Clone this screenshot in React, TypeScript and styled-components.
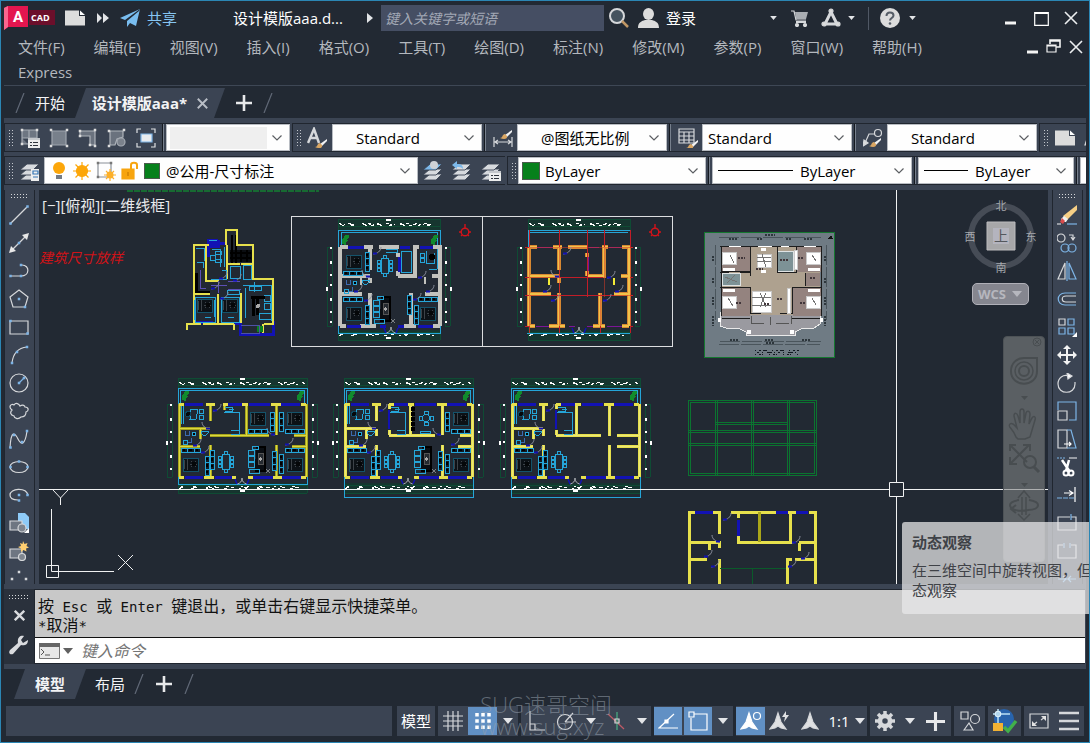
import React from "react";
import styled, { createGlobalStyle, css } from "styled-components";

const c = {
  dark: "#222933",
  panel: "#3b4453",
  line: "#20262f",
  icon: "#d6d8db",
  blue: "#7db4e6",
  active: "#6190c4",
  cyan: "#25a5d8",
  yellow: "#e6e04c",
  navy: "#1212b4",
  green: "#0b7430",
  dim: "#0f4b34",
};

const Global = createGlobalStyle`
  * { box-sizing: border-box; }
  body { margin: 0; background: ${c.dark}; }
  body, button, input, select {
    font-family: "Open Sans", "Noto Sans CJK SC", sans-serif;
    font-size: 15px;
    line-height: 20px;
  }
  button { border: 0; padding: 0; background: none; color: inherit; white-space: nowrap; }
  svg { display: block; flex: none; }
`;

/* ---------- window frame ---------- */

const Window = styled.div`
  display: flex;
  flex-direction: column;
  min-height: 100vh;
  border: 1px solid #2b86b4;
  padding: 0 3px 6px;
  background: ${c.dark};
  color: #fff;
  overflow: hidden;
`;

const TitleBar = styled.header`
  display: flex;
  align-items: center;
  height: 34px;
`;

const Logo = styled.div`
  display: flex;
  width: 51px;
  margin-right: 10px;
`;

const TitleButton = styled.button<{ $w: number; $color?: string }>`
  display: flex;
  align-items: center;
  justify-content: center;
  width: ${(p) => p.$w}px;
  gap: 7px;
  height: 26px;
  color: ${(p) => p.$color ?? "#fff"};
`;

const DocTitle = styled.div`
  width: 134px;
  margin-left: 56px;
  white-space: nowrap;
`;

const SearchBox = styled.input`
  flex: 0 1 223px;
  min-width: 0;
  height: 26px;
  margin-left: 8px;
  padding: 0 4px;
  border: 0;
  background: #454e63;
  font-style: italic;
  font-size: 14px;
  color: #fff;
  &::placeholder { color: #a2a8b5; opacity: 1; }
`;

const Rule = styled.span`
  width: 1px;
  height: 23px;
  margin: 0 9px 0 13px;
  background: #505865;
`;

const Spacer = styled.span<{ $w?: number }>`
  flex: ${(p) => (p.$w ? `0 0 ${p.$w}px` : "1")};
`;

const MenuBar = styled.nav`
  display: flex;
  align-items: flex-start;
  height: 51px;
  border-bottom: 1px solid #3e4755;
`;

const MenuList = styled.div`
  display: flex;
  flex: 1;
  flex-wrap: wrap;
  column-gap: 29px;
  padding: 0 60px 0 14px;
`;

const MenuItem = styled.button`
  height: 25px;
  padding-bottom: 1px;
  color: #b4b8be;
`;

const DocControls = styled.div`
  display: flex;
  gap: 8px;
  padding: 4px 3px 0 0;
`;

/* ---------- tab strips ---------- */

const TabStrip = styled.div<{ $top: number; $left: number }>`
  display: flex;
  align-items: center;
  height: ${(p) => 30 + p.$top}px;
  padding: ${(p) => p.$top}px 0 0 ${(p) => p.$left}px;
  background: ${c.dark};
`;

const Tab = styled.button<{ $w: number; $active?: boolean }>`
  display: flex;
  align-items: center;
  justify-content: center;
  gap: 10px;
  width: ${(p) => p.$w}px;
  height: 30px;
  color: #f2f3f5;
  ${(p) =>
    p.$active &&
    css`
      font-weight: 700;
      background: ${c.panel};
      clip-path: polygon(11px 0, 100% 0, calc(100% - 11px) 100%, 0 100%);
    `}
`;

/* ---------- toolbars ---------- */

const ToolbarArea = styled.div`
  display: flex;
  flex-direction: column;
  gap: 4px;
  padding: 5px 0;
  background: ${c.panel};
  overflow: hidden;
`;

const ToolbarRow = styled.div`
  display: flex;
  height: 29px;
  gap: 2px;
  overflow: hidden;
`;

const Toolbar = styled.div`
  display: flex;
  flex: none;
  align-items: center;
  border: 1px solid ${c.line};
  border-right-width: 0;
  padding-left: 3px;
`;

const Grip = styled.span`
  width: 5px;
  height: 17px;
  margin-right: 2px;
  background: radial-gradient(circle, #c3c7cd 0 0.6px, transparent 1px) 0 0 / 3px 3px;
`;

const TopGrip = styled.span<{ $w: number }>`
  width: ${(p) => p.$w}px;
  height: 6px;
  background: radial-gradient(circle, #d6d8db 0 0.6px, transparent 1px) 0 0 / 3px 3px;
`;

const ToolButton = styled.button`
  display: flex;
  flex: none;
  align-items: center;
  justify-content: center;
  width: 29px;
  height: 27px;
`;

const Divider = styled.span`
  width: 2px;
  height: 27px;
  margin: 0 2px;
  border-left: 1px solid #161b22;
  border-right: 1px solid #77808d;
`;

const ComboBox = styled.label<{ $w: number }>`
  display: flex;
  flex: none;
  align-items: center;
  width: ${(p) => p.$w}px;
  height: 27px;
  padding: 0 7px 0 3px;
  gap: 5px;
  border: 1px solid #b8bcc2;
  background: #fefefe;
`;

const Select = styled.select<{ $indent?: number }>`
  flex: 1;
  min-width: 0;
  height: 22px;
  padding: 0 0 0 ${(p) => p.$indent ?? 0}px;
  border: 0;
  appearance: none;
  background: transparent;
  color: #000;
  opacity: 1;
  &:disabled { background: #efefef; }
`;

const Swatch = styled.span<{ $size: number }>`
  width: ${(p) => p.$size}px;
  height: ${(p) => p.$size}px;
  border: 1px solid #4a5a4c;
  background: #06801b;
`;

const LineSample = styled.span<{ $w: number }>`
  width: ${(p) => p.$w}px;
  height: 1px;
  margin: 0 2px;
  background: #000;
`;

/* ---------- workspace ---------- */

const Workspace = styled.main`
  position: relative;
  display: flex;
  flex: 1;
  min-height: 394px;
  gap: 4px;
  padding-right: 3px;
  background: ${c.panel};
`;

const SideBar = styled.div`
  display: flex;
  flex: none;
  flex-direction: column;
  align-items: center;
  width: 31px;
  padding: 3px 1px 0 0;
  border: 1px solid ${c.line};
  border-top: 0;
  border-bottom: 0;
  height: 394px;
  overflow: hidden;
`;

const SideButton = styled.button`
  display: flex;
  flex: none;
  align-items: center;
  justify-content: center;
  width: 28px;
  height: 28px;
`;

const SideTools = styled.div`
  display: flex;
  flex-direction: column;
  width: 28px;
  padding-top: 2px;
  margin-top: 6px;
  margin-top: 0;
`;

const Canvas = styled.section`
  position: relative;
  flex: 1;
  min-width: 0;
  overflow: hidden;
  background: ${c.dark};
`;

const Drawing = styled.svg`
  position: absolute;
  width: 100%;
  height: 100%;
`;

const ViewLabels = styled.div`
  position: absolute;
  left: 3px;
  top: 5px;
  display: flex;
  color: #e9eaec;
`;

const ViewCube = styled.div`
  position: absolute;
  right: 8px;
  top: 4px;
`;

const Wcs = styled.button`
  position: absolute;
  right: 19px;
  top: 93px;
  display: flex;
  align-items: center;
  gap: 6px;
  width: 57px;
  height: 22px;
  padding-left: 5px;
  border: 1px solid #b0b0b8;
  border-radius: 5px;
  background: #85868f;
  color: #b6b7be;
  font-size: 13px;
`;

const NavBar = styled.div`
  position: absolute;
  right: 3px;
  top: 146px;
  width: 42px;
  height: 226px;
  border-radius: 4px;
  border: 1px solid #4d5256;
  background: rgba(128, 132, 131, 0.6);
`;

const Tooltip = styled.aside`
  position: absolute;
  right: -3px;
  top: 332px;
  z-index: 2;
  width: 187px;
  height: 92px;
  padding: 10px 0 0 10px;
  border-radius: 3px 0 0 3px;
  background: rgba(233, 233, 235, 0.73);
  color: #3f4247;
  overflow: hidden;
  white-space: nowrap;
`;

const TipTitle = styled.strong`
  display: block;
  margin-bottom: 8px;
`;

/* ---------- command line ---------- */

const CommandPanel = styled.section`
  display: flex;
  height: 85px;
  padding: 5px 0;
  background: ${c.panel};
`;

const CommandSide = styled.div`
  display: flex;
  flex-direction: column;
  align-items: center;
  width: 30px;
  padding-top: 5px;
  background: #2a313c;
`;

const SideAction = styled.button`
  display: flex;
  align-items: center;
  height: 30px;
`;

const CommandBody = styled.div`
  display: flex;
  flex: 1;
  flex-direction: column;
  margin-right: 1px;
  border: 1px solid ${c.line};
  border-right: 0;
`;

const History = styled.div`
  height: 48px;
  padding: 7px 3px 0;
  border-bottom: 1px solid #111;
  background: #c8c8c8;
  color: #111;
  font-size: 16px;
  line-height: 19px;
`;

const HistoryLine = styled.div`
  height: 19px;
  white-space: pre;
`;

const Mono = styled.span`
  font-family: "DejaVu Sans Mono", monospace;
  font-size: 14px;
`;

const Prompt = styled.label`
  display: flex;
  flex: 1;
  align-items: center;
  padding-left: 4px;
  gap: 3px;
  background: #fff;
`;

const CommandInput = styled.input`
  flex: 1;
  height: 22px;
  padding: 0 5px;
  border: 0;
  font-style: italic;
  font-size: 16px;
  &::placeholder { color: #757575; opacity: 1; }
`;

/* ---------- status bar ---------- */

const StatusBar = styled.footer`
  position: relative;
  display: flex;
  height: 30px;
  margin-top: 7px;
  padding: 0 2px;
  gap: 3px;
`;

const StatusInfo = styled.div`
  flex: 1;
  margin-right: 2px;
  background: ${c.panel};
`;

const StatusGroup = styled.div`
  display: flex;
  flex: none;
  align-items: center;
  background: ${c.panel};
`;

const StatusButton = styled.button<{ $w: number; $on?: boolean }>`
  display: flex;
  align-items: center;
  justify-content: center;
  width: ${(p) => p.$w}px;
  height: 28px;
  background: ${(p) => (p.$on ? c.active : "transparent")};
`;

const Watermark = styled.div`
  position: absolute;
  right: 474px;
  bottom: -1px;
  font-size: 22px;
  line-height: 22px;
  font-weight: 300;
  color: rgba(150, 160, 172, 0.55);
  pointer-events: none;
  white-space: nowrap;
`;

/* ---------- glyphs ---------- */

type GlyphProps = { w?: number; h?: number; children: React.ReactNode; stroke?: string };

const Glyph = ({ w = 20, h = 20, stroke = c.icon, children }: GlyphProps) => (
  <svg width={w} height={h} viewBox={`0 0 ${w} ${h}`} fill="none" stroke={stroke} strokeWidth="1.2">
    {children}
  </svg>
);

const Chevron = () => (
  <Glyph w={10} h={6} stroke="#5c5f63">
    <path d="M.5.5 5 5 9.500.5" />
  </Glyph>
);
const Caret = ({ small, fill = "#e3e5e8" }: { small?: boolean; fill?: string }) => (
  <svg width={small ? 7 : 10} height={small ? 4 : 6} viewBox="0 0 10 6">
    <path d="M0 0h10L5 6z" fill={fill} />
  </svg>
);
const Slash = () => (
  <Glyph w={10} h={20} stroke="#616977">
    <path d="M1 20 9 0" />
  </Glyph>
);
const Plus = ({ size = 16 }: { size?: number }) => (
  <svg width={size} height={size} viewBox="0 0 16 16">
    <path d="M8 0v16M0 8h16" stroke="#e8e9eb" strokeWidth="2.6" />
  </svg>
);
const Cross = ({ s = 14, w = 1.6, color = "#eceef0" }) => (
  <svg width={s} height={s} viewBox="0 0 14 14">
    <path d="M1 1 13 13M13 1 1 13" stroke={color} strokeWidth={w} />
  </svg>
);
const Minimize = () => (
  <Glyph w={11} h={14}>
    <path d="M0 12h11" stroke="#f4f4f4" strokeWidth="3" />
  </Glyph>
);
const Sheet = () => (
  <Glyph>
    <path d="M0 2.500h14V8h6v9.500H0z" fill="#dcdcdc" stroke="none" />
    <path d="M15 2.500 20 7h-5z" fill="#fff" stroke="none" />
  </Glyph>
);
const Sq = ({ p, f = c.blue }: { p: [number, number][]; f?: string }) => (
  <g stroke="none" fill={f}>
    {p.map(([x, y]) => (
      <rect key={`${x}-${y}`} x={x - 1.25} y={y - 1.25} width="2.500" height="2.500" />
    ))}
  </g>
);
const Brush = ({ x = 0, y = 0 }) => (
  <g transform={`translate(${x} ${y})`} stroke="none">
    <path d="M11 0 4 5l2 2 5-5z" fill="#f1f2f3" />
    <path d="M4 4c-3 0-2 4-5 4 4 2 8 1 7-2z" fill="#d9a663" />
  </g>
);
const PropertyCard = () => (
  <g stroke="none">
    <path d="M8 10h12v10H8z" fill="#eceded" />
    <path d="M8 10h12v2H8z" fill="#c5c8cc" />
    <path d="M10 14h2v1h-2zm3 0h5v1h-5zm-3 3h2v1h-2zm3 0h5v1h-5z" fill="#30353d" />
  </g>
);
const Corners = () => <path d="M1 5V1h4M15 1h4v4M19 15v4h-4M5 19H1v-4" stroke="#dfe1e4" />;
const Sheets = ({ top = "#d7dade" }) => (
  <g stroke={c.panel} strokeWidth=".9" fill="#d7dade">
    <path d="m0 19 7-6h12l-6 6z" />
    <path d="m0 14 7-6h12l-6 6z" />
    <path d="m0 9 7-6h12l-6 6z" fill={top} />
  </g>
);

const viewportIcons = [
  <><path d="M2 2h15v8H2zM9 2v8M2 10v6h6" fill="#6e7682" stroke="#a5abb3" /><Sq f="#ddd" p={[[2, 2], [17, 2], [2, 16]]} /><PropertyCard /></>,
  <><path d="M3 3h14v14H3z" fill="#78808b" stroke="#9ea4ad" /><Sq f="#ddd" p={[[2, 2], [18, 2], [2, 18], [18, 18]]} /></>,
  <><path d="M2 3h15v14h-5V8H2z" fill="#6a727e" stroke="#aeb3ba" /><Sq f="#ddd" p={[[2, 3], [17, 2], [17, 18], [12, 17], [2, 8]]} /></>,
  <><path d="M3 3h13v6l-6 2-2 6H3z" fill="#6a727e" stroke="#aeb3ba" /><circle cx="14" cy="14" r="4" fill="#7b828c" stroke="#a5abb3" /><Sq f="#ddd" p={[[2, 3], [17, 2], [2, 18]]} /></>,
  <><Corners /><path d="M5 6h11v8H5z" fill="#e8ebee" stroke={c.blue} /></>,
];

const drawIcons: [string, React.ReactNode][] = [
  ["直线", <><path d="M1 19 18 2" /><Sq p={[[1.5, 18.5], [18.5, 1.5]]} /></>],
  ["构造线", <><path d="M3 17 17 3" /><path d="M0 20 2 13l5 5zM20 0l-7 2 5 5z" fill="#e8e8e8" stroke="none" /><Sq p={[[10, 10]]} /></>],
  ["多段线", <><path d="M1 15h11c9 0 9-11 1-11" /><Sq p={[[1.5, 15], [12, 15], [12, 4]]} /></>],
  ["多边形", <><path d="m10 1 9 7-3 10H4L1 8z" /><Sq p={[[10, 10], [16, 18]]} /></>],
  ["矩形", <><path d="M1 4h18v13H1z" /><Sq p={[[1.5, 4], [18.5, 16.500]]} /></>],
  ["圆弧", <><path d="M3 18C4 9 9 3 18 2" /><Sq p={[[3, 18], [8, 7], [18, 2]]} /></>],
  ["圆", <><circle cx="10" cy="10" r="9" /><path d="m10 10 5-5" stroke={c.blue} /><Sq p={[[10, 10], [15, 5]]} /></>],
  ["修订云线", <path d="M3 9C-1 6 2 2 5 4c2-3 5-1 6 1 3-2 5 0 5 1 4 0 4 4 1 5 0 4-2 5-5 5-3 3-7 1-7-1-4-1-4-4-2-6z" />],
  ["样条曲线", <><path d="M1 19C2 0 6 4 9 10s7 7 9-8" /><Sq p={[[1.5, 18.5], [5, 6], [13, 13], [18, 2]]} /></>],
  ["椭圆", <><ellipse cx="10" cy="10" rx="9" ry="5.500" /><Sq p={[[1.500, 10], [18.500, 10], [10, 4.500]]} /></>],
  ["椭圆弧", <><path d="M19 10C17 2 1 3 1 10c0 4 4 5 8 5" /><Sq p={[[10, 10], [18.5, 10], [10, 15.500]]} /></>],
  ["插入块", <><path d="M9 0h7l4 4v12H9z" fill="#8ecbf8" stroke="none" /><path d="M1 8h12v9H1z" fill="#6e7682" /><circle cx="13" cy="15" r="4" fill="#7e858f" /><path d="M20 15v5h-5z" fill="#fff" stroke="none" /></>],
  ["创建块", <><path d="M1 8h12v9H1z" fill="#6e7682" /><circle cx="13" cy="16" r="3.500" fill="#7e858f" /><path d="m14 0 1.500 3 3-1-1 3 2.500 1.500-3 1 .5 3-3-1.500-2.500 2v-3.500L9 6l3-1-1-3 2.500 1z" fill="#ffcf70" stroke="none" /></>],
  ["点", <Sq f="#d6d8db" p={[[10, 3], [3, 10], [17, 10]]} />],
];

const modifyIcons: [string, React.ReactNode][] = [
  ["删除", <><path d="M20 0v5L10 15l-4-4z" fill="#f6cf85" stroke="none" /><path d="m7 11 4 3-2 3H4v-3z" fill="#f0f0f0" stroke="none" /><path d="m5 13 3 3-2 3-3-2z" fill="#d94b4b" stroke="none" /><path d="M0 19h4" /><path d="M10 19h10" stroke={c.blue} /></>],
  ["复制", <><circle cx="4" cy="5" r="4" /><path d="M12 2h4v4m-2-2 2 3 2-3" /><circle cx="8" cy="15" r="4" stroke={c.blue} /><circle cx="15" cy="15" r="4" stroke={c.blue} /></>],
  ["镜像", <><path d="M8 2v16H1z" /><path d="M12 2v16h7zM10 0v20" stroke={c.blue} /></>],
  ["偏移", <><path d="M19 4H8C-1 4-1 16 8 16h11" stroke={c.blue} /><path d="M19 7H9c-5 0-5 6 0 6h10" /></>],
  ["阵列", <><path d="M2 2h6v6H2z" /><path d="M11 2h6v6h-6zM2 11h6v6H2zM11 11h6v6h-6z" stroke={c.blue} /><path d="M20 15v5h-5z" fill="#fff" stroke="none" /></>],
  ["移动", <path d="M10 0 14 4h-3v5h5V6l4 4-4 4v-3h-5v5h3l-4 4-4-4h3v-5H4v3l-4-4 4-4v3h5V4H6z" fill="#f2f2f2" stroke="none" />],
  ["旋转", <><path d="M12 3C6 1 1 5 1 11c0 11 17 11 17 0V9" /><path d="m10 0 5 3-4 3z" fill="#fff" /></>],
  ["缩放", <><path d="M1 9V1h18v18h-7" stroke={c.blue} /><path d="M1 10h9v9H1z" /></>],
  ["拉伸", <><path d="M1 1h9v18H1z" /><path d="M10 1h4l5 18h-9" stroke={c.blue} /><path d="M7 15h7m-2-2 2 2-2 2" stroke="#fff" /></>],
  ["修剪", <><path d="M0 1h9" stroke={c.blue} strokeDasharray="2 1" /><path d="M12 1h8" /><path d="m5 3 8 12M12 3 9 14" stroke="#fff" strokeWidth="2.500" /><circle cx="9" cy="16" r="2.500" stroke="#fff" strokeWidth="2" /><circle cx="14" cy="16" r="2.500" stroke="#fff" strokeWidth="2" /></>],
  ["延伸", <><path d="M18 2v15M7 8h8m-3-2.500 4 2.500-4 2.500" stroke="#fff" /><path d="M0 13h17" stroke={c.blue} strokeDasharray="5 1" /></>],
  ["打断于点", <><path d="M14 4h5v13H1V4h12" /><path d="M14 1v6" stroke={c.blue} /></>],
  ["打断", <><path d="M6 4H1v13h18V4h-5" /><path d="M7 2v5M13 2v5" stroke={c.blue} /></>],
  ["合并", <path d="M1 10h18M6 7l3 3-3 3M14 7l-3 3 3 3" stroke={c.blue} />],
];

/* ---------- drawing content ---------- */

const Bed = ({ x, y }: { x: number; y: number }) => (
  <g transform={`translate(${x} ${y})`}>
    <path d="M0 0h15v13H0z" fill="#0c1116" stroke="#14536b" />
    <path d="M1 2v9M4 1v11M8 3l5 6M13 3 8 9M7 6h7" stroke="#3c4248" />
    <path d="M9 4h4v4H9z" fill="#050709" />
  </g>
);
const Cabinet = ({ x, y, v }: { x: number; y: number; v?: boolean }) => (
  <g transform={`translate(${x} ${y})${v ? " rotate(90)" : ""}`}>
    <path d="M0 0h19v4H0zM6 0v4M13 0v4" stroke={c.cyan} fill="#111b24" />
    <path d="M2 2h2M8 2h3M15 2h2" stroke="#000" strokeWidth="2" />
  </g>
);
const Dining = ({ x, y }: { x: number; y: number }) => (
  <g transform={`translate(${x} ${y})`} stroke={c.cyan} fill="none">
    <path d="M5 4h7v15H5zM7 1h3v3H7zM7 19h3v3H7z" />
    <path d="M1 6h3v3H1zM1 10h3v3H1zM1 14h3v3H1zM13 6h3v3h-3zM13 10h3v3h-3zM13 14h3v3h-3z" />
  </g>
);
const Sofa = ({ x, y }: { x: number; y: number }) => (
  <g transform={`translate(${x} ${y})`} fill="none">
    <path d="M8 1h9v24H7" fill="#0a0e13" stroke="#000" strokeWidth="2" />
    <path d="M10 7h5v11h-5z" fill="#252a30" stroke="#555" />
    <circle cx="12.500" cy="13" r="1.800" fill="#aaa" />
    <path d="M0 4h6v5H0zM0 10h6v5H0zM0 16h6v5H0zM1 23h10v4H1zM4 0h6v3H4z" stroke={c.cyan} />
    <path d="m18 23 4 4m0-4-4 4" stroke="#7d8286" />
  </g>
);
const Desk = ({ x, y }: { x: number; y: number }) => (
  <g transform={`translate(${x} ${y})`} fill="none" stroke={c.cyan}>
    <path d="M0 0v18M2 0v18" />
    <path d="M10 3h7l-2 10h-6zM18 3h4v4h-4zM18 9h4v4h-4z" />
    <circle cx="7" cy="8" r="2.500" fill="#05080b" stroke="#0d4a63" />
  </g>
);
const Bath = ({ x, y }: { x: number; y: number }) => (
  <g transform={`translate(${x} ${y})`} fill="none" stroke={c.cyan}>
    <path d="M20 1h7v2l-2 2h-3l-2-2zM2 10h4v4H2z" />
    <path d="M4 1v4h4V1M10 8v4H7" stroke="#3c6bb0" />
    <circle cx="13" cy="4" r="2" fill="#000" />
  </g>
);
const Plant = ({ x, y }: { x: number; y: number }) => (
  <path transform={`translate(${x} ${y})`} d="m0 9 0-5 2-1 1-3 4 0 0 3-2 1 1 2-2 1 0 3z" fill="#118a2d" />
);
const Door = ({ x, y, flip }: { x: number; y: number; flip?: boolean }) => (
  <g transform={`translate(${x} ${y}) scale(${flip ? -1 : 1} 1)`} fill="none" shapeRendering="auto">
    <path d="M0 7C4 7 8 4 8 0" stroke="#8a8e9c" />
    <path d="M0 6.500h4" stroke={c.navy} strokeWidth="2" />
  </g>
);
const Entry = ({ x, y }: { x: number; y: number }) => (
  <g transform={`translate(${x} ${y})`} fill="none" shapeRendering="auto">
    <path d="M-5 6Q0 5 0 0 0 5 5 6" stroke="#a9adb2" />
    <path d="M-7 1-5 6M7 1 5 6" stroke={c.navy} strokeWidth="1.500" />
  </g>
);

/* Dimension chains round a plan: green runs with tiny figures. */
const Dimensions = ({ x, y, w, h, top, bottom }: { x: number; y: number; w: number; h: number; top: number; bottom: number }) => (
  <g fill="none">
    <path d={`M${x} ${y - top - 3}h${w}M${x} ${y + bottom + 3}h${w}`} stroke="#16352f" strokeWidth="11" />
    <path d={`M${x} ${y - top - 8}h${w}M${x} ${y - top - 1}h${w}M${x} ${y + bottom}h${w}M${x} ${y + bottom + 8}h${w}`} stroke={c.dim} />
    <path d={`M${x - 11} ${y}v${h}M${x - 6} ${y}v${h}M${x + w + 5} ${y}v${h}M${x + w + 10} ${y}v${h}M${x - 11} ${y}h5M${x - 11} ${y + h}h5M${x + w + 5} ${y}h5M${x + w + 5} ${y + h}h5`} stroke={c.dim} />
    <path d={`M${x} ${y - top - 8}v14M${x + w} ${y - top - 8}v14M${x} ${y + bottom - 6}v14M${x + w} ${y + bottom - 6}v14`} stroke={c.dim} />
    <path d={`M${x + 2} ${y - top - 3}h${w - 4}`} stroke="#fff" strokeWidth="1" strokeDasharray="2 2 1 5 4 9 3 3 2 2 1 3 4 9" />
    <path d={`M${x + 1} ${y - top - 4}h${w - 4}M${x + 4} ${y - top - 2}h${w - 6}`} stroke="#fff" strokeWidth="1" strokeDasharray="2 7 3 11 2 4 3 6" />
    <path d={`M${x + 2} ${y + bottom + 2}h${w - 4}`} stroke="#fff" strokeWidth="1" strokeDasharray="3 10 4 9 2 1 3 3 4 12" />
    <path d={`M${x + 3} ${y + bottom + 1}h${w - 6}M${x + 1} ${y + bottom + 3}h${w - 4}`} stroke="#fff" strokeWidth="1" strokeDasharray="2 10 3 12 2 4" />
    <path d={`M${x + w / 2 - 3} ${y - top - 7}h5M${x + w / 2 - 3} ${y + bottom + 6}h5`} stroke="#fff" strokeWidth="2" />
    <path d={`M${x - 7} ${y}v${h}M${x + w + 6} ${y}v${h}`} stroke="#fff" strokeWidth="2" strokeDasharray="2 12 3 10 2 8" />
    <path d={`M${x - 11} ${y + h / 2}v4M${x + w + 11} ${y + h / 2}v4`} stroke="#fff" strokeWidth="2" />
  </g>
);

const wallsTownhouse =
  "M0 0h8M24 0h9M39 0h20M73 0h6M93 0h7V79M0 0V79M0 79h6M20 79h16M64 79h12M93 79h7M30 0v23M30 31v5M30 46v33M58 6v4M58 24v5M75 0v29H58M0 29h30M0 47h22M92 29h8M85 47h15M71 46v33";
const innerWallsTownhouse = "M21 30v8M85 30v7";
const windowsTownhouse = "M8 0h16M60 0h10M80 0h13M7 79h14M40 79h6M58 79h6M78 79h15M59 10v15";

const PlanFurnished = () => (
  <g transform="translate(340 247)" fill="none">
    <Dimensions x={-2} y={0} w={102} h={79} top={20} bottom={85} />
    <path d="M-2 86v-103h102V86zM1 0v-15h96V0" stroke={c.cyan} />
    <path d={wallsTownhouse} stroke="#c2c2bd" strokeWidth="4" />
    <path d={innerWallsTownhouse} stroke="#c2c2bd" strokeWidth="2" />
    <path d={windowsTownhouse} stroke={c.navy} strokeWidth="3" />
    <Bed x={6} y={8} /><Bed x={6} y={60} /><Bed x={80} y={60} />
    <Cabinet x={3} y={24} /><Cabinet x={3} y={50} /><Cabinet x={78} y={50} />
    <Cabinet x={29} y={5} v /><Cabinet x={29} y={58} v /><Cabinet x={71} y={48} v /><Cabinet x={78} y={58} v />
    <Dining x={36} y={7} /><Sofa x={33} y={49} /><Bath x={2} y={32} />
    <path d="M46 2h11v3H46M61 4h10v21H61zM80 6h4v4h-4zM80 11h4v4h-4zM86 4v12h8V6M97 2v20M89 22h8" stroke={c.cyan} />
    <circle cx="92" cy="10" r="3" fill="#000" />
    <Door x={33} y={0} /><Door x={30} y={23} flip /><Door x={78} y={24} /><Door x={14} y={38} /><Door x={86} y={38} /><Door x={24} y={47} /><Door x={73} y={46} />
    <Plant x={2} y={-12} /><Plant x={91} y={-12} /><Entry x={51} y={80} />
  </g>
);

const PlanStructure = () => (
  <g transform="translate(529 247)" fill="none">
    <Dimensions x={-1} y={0} w={102} h={79} top={20} bottom={85} />
    <path d="M-2 86h103M-1 0v-17h102V0M1 -15h98" stroke={c.cyan} />
    <path d={windowsTownhouse} stroke="#7d1596" />
    <path d={wallsTownhouse} stroke="#d88832" strokeWidth="4" />
    <path d={wallsTownhouse} stroke="#f0c24a" strokeWidth="2" />
    <path d="M0-17V0M30-17V0M58-17V50M75-17V0M101-17V0M30 79v7M71 79v7M0 79v7M101 79v7M-4 0h4M101 0h3M-4 30h4M30 30h44M101 30h3M-4 48h4M22 48h63M101 48h3M-4 79h4M101 79h3M30 23v8M30 36v10" stroke="#c21d28" />
    <path d="M0 0V86M30 0V79M75 0v50M101 0V79M71 46v33M0 0h104M0 30h30M0 48h22M85 48h19" stroke="#cf3a26" strokeOpacity=".55" />
    <path d="M20 31v7M85 31v7" stroke="#f3ec36" strokeWidth="2" />
    <Door x={34} y={0} /><Door x={30} y={23} flip /><Door x={78} y={24} /><Door x={14} y={38} /><Door x={86} y={38} /><Door x={22} y={47} /><Door x={74} y={47} />
    <Entry x={50} y={80} />
  </g>
);

const Compass = ({ x, y }: { x: number; y: number }) => (
  <g transform={`translate(${x} ${y})`} fill="none" stroke="#d31219" strokeWidth="1.400" shapeRendering="auto">
    <circle r="3.800" /><path d="M0-8v4M-6 0h2M4 0h2M-4 4l1-1M4 4 3 3" />
  </g>
);

const PlanWide = ({ x, balcony, variant }: { x: number; balcony: number; variant: 1 | 2 | 3 }) => {
  const core = {
    1: "M31 0v17M0 24h31M31 31h59M67 0v31M97 0v31M115 31h12M0 42h21M113 42h14M31 41v32M97 41v32M21 24v11M45 0v6",
    2: "M31 0v17M0 24h31M31 25v7M44 31h46M44 0v5M65 0v31M97 0v31M115 31h12M0 42h21M113 42h14M31 41v32M97 41v32M21 24v11M44 26v5",
    3: "M31 0v17M0 24h31M31 25v7M44 31h45M44 0v5M64 0v31M97 0v32M97 41v32M0 42h21M105 31h22M105 42h22M31 41v32M21 24v11M44 26v5",
  }[variant];
  const piers = "M0 0H5M27 0h9M44 0h5M63 0h6M92 0h10M122 0h5M0 73H5M25 73h10M53 73h4M69 73h5M94 73h9M122 73h5";
  return (
    <g transform={`translate(${x} 404)`} fill="none">
      <Dimensions x={-1} y={0} w={129} h={73} top={18} bottom={81} />
      <path d={`M-1 ${balcony}V-16H128V${balcony}zM1 0v-14h124V0`} stroke={c.cyan} />
      <path d={`M0 0V73M127 0V73${core}`} stroke={variant === 1 ? "#a7a51d" : c.yellow} strokeWidth="3" />
      <path d={`M0 0V73M127 0V73${core}`} stroke={variant === 1 ? "#dcd83f" : "#ece778"} />
      <path d="M6 0h18M49 0h14M70 0h21M102 0h19M6 73h18M36 73h17M74 73h20M103 73h19" stroke={c.navy} strokeWidth="3" />
      <path d={piers} stroke={c.yellow} strokeWidth="3" />
      {variant > 1 && <path d="M44 6v19" stroke={c.navy} strokeWidth="2" />}
      <Desk x={2} y={2} /><Bath x={2} y={26} /><Cabinet x={2} y={44} /><Bed x={4} y={54} />
      <Cabinet x={35} y={46} v /><Cabinet x={30} y={52} v /><Dining x={38} y={46} />
      <path d="M46 3h7v4H46M45 8h15v19M52 26h8v4h-8M60 8v22M50 5h5" stroke={c.cyan} />
      {variant !== 3 && (
        <>
          <Bed x={108} y={8} /><Bed x={108} y={54} /><Cabinet x={106} y={25} /><Cabinet x={106} y={44} />
          <Cabinet x={104} y={8} v /><Cabinet x={104} y={50} v /><Cabinet x={97} y={47} v /><Sofa x={69} y={42} />
          <Door x={106} y={34} /><Door x={96} y={24} flip />
        </>
      )}
      {variant === 1 && (<><Bed x={71} y={8} /><Cabinet x={69} y={25} /><Cabinet x={95} y={8} v /></>)}
      {variant === 2 && (
        <>
          <path d="M68 3v24" stroke="#000" strokeWidth="4" strokeDasharray="4 1" />
          <circle cx="81" cy="14" r="3.500" stroke={c.cyan} />
          <path d="M79 7h4v3h-4zM79 18h4v3h-4zM74 12h3v4h-3zM85 12h3v4h-3zM75 27h10v2H75z" stroke={c.cyan} />
        </>
      )}
      <Door x={34} y={0} /><Door x={31} y={18} flip /><Door x={14} y={35} /><Door x={22} y={42} />
      <Plant x={3} y={-13} /><Plant x={118} y={-13} /><Entry x={63} y={74} />
    </g>
  );
};

const PlanApartment = () => (
  <g fill="none">
    <path d="M230 250h22v12h-22z" fill="#0a0d11" />
    <path d="M232 235v28M236 235v28M241 250v12M247 250v12M230 253h21M230 258h21" stroke="#000" strokeWidth="2" />
    <path d="M196 273v20h14" stroke="#000" strokeWidth="4" />
    <path d="M208 257V246h10v-6M226 243h-17M193 322h20M222 323h18v11h33v-13" stroke={c.navy} strokeWidth="3" />
    <path d="M207 239h11v8h-11z" fill={c.navy} />
    <path d="M187 330v-6h14M194 323v-78h15M194 294h16M206 245v36h13M226 245v-15h11v15h16v34h20v45h-9M227 245v34M227 264h13M241 264h12M218 294v29M241 293v30M203 324h31M234 324v6M263 324v9" stroke={c.yellow} strokeWidth="2" />
    <path d="M209 240h8M212 249h8v18M224 247v20M210 255h5v5h-5zM215 251h6v3h-6zM215 259h6v3h-6zM222 270h4v9h-15M230 266h10v12h-10zM243 265h8v14h-8zM227 290h12v4h-12zM243 285h28v36M245 288v30M249 286h12v4h-12zM254 282v10M264 295h6v6h-6zM264 303h6v6h-6zM259 313h12v6h-12zM195 297h20v25h-20zM221 297h18v25h-18zM196 248h8v13M197 262h6v6M205 317h6M228 317h6M214 300v17M194 300v20" stroke={c.cyan} />
    <Bed x={197} y={299} /><Bed x={222} y={299} />
    <path d="M253 297v19M257 297v18M251 297h14" stroke="#000" strokeWidth="3" />
    <circle cx="258" cy="306" r="2" fill="#aaa" />
    <path d="M200 270v18h6M211 285h16M218 281v12M228 281h12M228 289h13" stroke="#5c4fb5" />
    <Door x={211} y={282} /><Door x={220} y={292} /><Door x={233} y={274} /><Door x={219} y={272} />
    <path d="M257 326h6v6h-6z" fill="#0a8021" /><path d="M241 325h18v8h-18" stroke="#4d52a5" />
  </g>
);

const PlanRendered = () => (
  <g fill="none">
    <path d="M704 232h130v125h-130z" fill="#6f7b84" stroke="#14772f" />
    <path d="M720 312v14l6 2h12l8 4v3h49v-3l8-4h11l6-4v-12z" fill="#9a9aa0" stroke="#e9e9e9" />
    <path d="M721 247h99v68H721z" fill="#aea18f" />
    <path d="M721 247h29v24h-29zM797 247h24v25h-24zM721 288h29v28h-29zM793 288h28v28h-28zM805 273h15v13h-15z" fill="#94837f" />
    <path d="M777 251h16v20h-16zM722 273h18v12h-18z" fill="#7d9296" stroke="#dfe3e4" />
    <path d="M721 246v70M821 246v70M720 246h102M750 247v24h-29M777 247v25h19v-25M720 272h9M740 272h10v4M720 287h30v27M792 287h30M792 287v27M805 273v13M750 313h11M780 313h12M722 318h28M792 318h29" stroke="#1d1d1d" />
    <path d="M729 246h12M758 246h14M781 246h8M804 246h12" stroke="#fff" />
    <path d="M722 252h14v12h-14zM806 252h14v12h-14zM722 296h14v12h-14zM806 296h14v12h-14zM752 291h19v21h-19zM757 254h14v13h-14zM794 250h3v19h-3zM787 288h3v25h-3z" fill="#fff" stroke="#c9c9c9" />
    <path d="M761 248h5v3h-5zM761 270h5v3h-5zM723 268h12v3h-12zM808 268h12v3h-12zM723 289h12v3h-12zM808 289h12v3h-12zM747 330h4v4h-4zM790 330h4v4h-4zM718 318h3v4h-3zM820 318h3v4h-3z" fill="#fff" />
    <path d="M757 257h14M757 261h14M762 254l4 13M752 297h19M752 305h19M760 293l6 14M766 293l-6 14M730 255l4 8M812 255l4 6M728 298l5 8M812 298l4 7M725 277l12 5M735 275l-8 8" stroke="#747474" />
    <path d="M770 317v8M752 323h12M776 323h13M751 316v8M791 316v8" stroke="#555" />
    <path d="M719 237h102M715 245v75M826 245v75M720 341h101M719 344h101" stroke="#4a555c" strokeDasharray="20 2" />
    <path d="M729 239h8M757 239h5M786 239h6M804 239h8M765 235h10M713 256v6M713 278v5M713 297v8M713 316v10M825 256v6M825 278v5M825 297v8M825 316v10M730 340h8M765 340h9M802 340h8M766 343h8" stroke="#2d363c" strokeWidth="2" strokeDasharray="2 1" />
    <path d="M738 258h7M780 260h8M764 304h5M777 299h6M736 303h6M800 303h6M798 258h6M756 269h7M810 278h6" stroke="#41363a" strokeWidth="2" strokeDasharray="2 1" />
    <path d="M755 350h44" stroke="#111820" strokeDasharray="1 3 2 2 4 5" />
    <path d="M757 352h42" stroke="#111820" strokeDasharray="2 3 1 4 5 2 1 3" />
    <path d="M755 354h43" stroke="#111820" strokeDasharray="1 3 2 1 1 6" />
    <path d="m831 235-3 4h5z" fill="#111" />
  </g>
);

const PlanYellow = () => (
  <g transform="translate(689 512)" fill="none">
    <path d="M0 74V0H6M24 0h8M42 0h46M98 0h9M120 0h6V74M30 0v22M0 30h30v6M0 47h18M30 47v27M49 0v6M49 24v6h52V0M20 31v7M110 31v8M110 30h16M98 74V47h5M106 47h20" stroke={c.yellow} strokeWidth="3" />
    <path d="M70 0v30" stroke="#aaa619" strokeWidth="3" />
    <path d="M6 0h18M87 0h12M107 0h12M49 8v16" stroke={c.navy} strokeWidth="3" />
    <path d="M31 56h66M63 56v20" stroke="#0a5a2a" />
    <Door x={34} y={1} /><Door x={31} y={23} flip /><Door x={103} y={24} /><Door x={15} y={38} /><Door x={112} y={40} /><Door x={22} y={48} /><Door x={99} y={48} />
  </g>
);

const Model = () => (
  <Drawing aria-label="模型空间">
    <g transform="translate(-39 -190)" shapeRendering="crispEdges">
      <path d="M127 190.500h192" stroke="#176a32" strokeWidth="2" strokeDasharray="6 1" />
      <text x="39" y="263" fill="#d01318" fontSize="14" fontStyle="italic" fontFamily='"Noto Sans CJK SC", sans-serif'>建筑尺寸放样</text>
      <path d="M291.500 216.500h381v130h-381zM482 217v129" stroke="#dcdde0" fill="none" />
      <PlanApartment />
      <PlanFurnished />
      <PlanStructure />
      <Compass x={465} y={232} />
      <Compass x={655} y={232} />
      <PlanRendered />
      <PlanWide x={179} balcony={80} variant={1} />
      <PlanWide x={345} balcony={93} variant={2} />
      <PlanWide x={512} balcony={93} variant={3} />
      <path d="M688 400h128v75H688zM690 402h124v71H690zM715 400v75M717 400v75M751 400v75M753 400v75M787 400v75M789 400v75M716 422h72M716 424h72M688 430h128M688 432h128M688 443h128M688 445h128" fill="none" stroke={c.green} />
      <PlanYellow />
      <g stroke="#f0f1f2" fill="none" shapeRendering="auto">
        <path d="M896.500 190V482M896.500 497V4000M39 489.500H889M904 489.500H4000M889.500 482.500h14v14h-14z" />
        <path d="M46.500 565.500h12v12h-12zM51.500 509v62.500H114M118 555l15 15M133 555l-15 15M53 490l7.500 8 7.500-8M60.500 498v7" />
      </g>
    </g>
  </Drawing>
);

/* ---------- pieces of the window ---------- */

type ComboProps = { w: number; label: string; value?: string; indent?: number; disabled?: boolean; children?: React.ReactNode };
const Combo = ({ w, label, value = "", indent, disabled, children }: ComboProps) => (
  <ComboBox $w={w}>
    {children}
    <Select aria-label={label} $indent={indent} disabled={disabled}>
      <option>{value}</option>
    </Select>
    <Chevron />
  </ComboBox>
);

const PaletteHeader = styled.div`
  display: flex;
  height: 12px;
`;

const ToolPalette = ({ tools }: { tools: [string, React.ReactNode][] }) => (
  <SideBar>
    <PaletteHeader><TopGrip $w={18} /></PaletteHeader>
    <SideTools>
      {tools.map(([name, icon]) => (
        <SideButton key={name} aria-label={name}><Glyph>{icon}</Glyph></SideButton>
      ))}
    </SideTools>
  </SideBar>
);

const arrowShape = "m9 2 3 9 5 7-5-1-3-2-3 2-5 1 5-7z";

const menus = ["文件(F)", "编辑(E)", "视图(V)", "插入(I)", "格式(O)", "工具(T)", "绘图(D)", "标注(N)", "修改(M)", "参数(P)", "窗口(W)", "帮助(H)", "Express"];

export default function App() {
  return (
    <>
      <Global />
      <Window>
        <TitleBar>
          <Logo>
            <svg width="51" height="24" viewBox="0 0 51 24">
              <path d="M25 4h26v15H25z" fill="#6c0f2b" />
              <path d="M0 2 4 0h20v21H4l-4 3z" fill="#e4164f" />
              <path d="M0 2 4 0v21l-4 3z" fill="#f9668e" />
              <text x="9" y="16" fill="#fff" fontSize="15" fontWeight="700" fontFamily="Roboto">A</text>
              <text x="27" y="15" fill="#fff" fontSize="9" fontWeight="700" fontFamily="Open Sans">CAD</text>
            </svg>
          </Logo>
          <TitleButton $w={20} aria-label="新建"><Sheet /></TitleButton>
          <TitleButton $w={35} aria-label="更多">
            <svg width="12" height="10" viewBox="0 0 12 10" fill="#e2e4e7"><path d="m0 0 5 5-5 5zM6 0l6 5-6 5z" /></svg>
          </TitleButton>
          <TitleButton $w={57} $color="#86c5f2">
            <svg width="20" height="18" viewBox="0 0 20 18" fill="#79bdf0"><path d="M20 0 0 9l5 2zM19 2 7 12v6l3-4 6 3L20 0z" /></svg>
            共享
          </TitleButton>
          <DocTitle>设计模版aaa.d...</DocTitle>
          <svg width="6" height="10" viewBox="0 0 6 10" fill="#e2e4e7"><path d="m0 0 6 5-6 5z" /></svg>
          <SearchBox aria-label="搜索" placeholder="键入关键字或短语" />
          <TitleButton $w={30} aria-label="查找">
            <Glyph><circle cx="8" cy="8" r="7" strokeWidth="2" fill="#45535f" /><path d="m13 13 6 6" stroke="#c19765" strokeWidth="2.500" /></Glyph>
          </TitleButton>
          <TitleButton $w={66}>
            <svg width="21" height="20" viewBox="0 0 21 20" fill="#dcdcdc"><ellipse cx="10.500" cy="6" rx="5.500" ry="6" /><path d="M0 20c0-6 4-7 7-8h7c3 1 7 2 7 8z" /></svg>
            登录
          </TitleButton>
          <Spacer />
          <Caret small />
          <TitleButton $w={44} aria-label="购物车">
            <Glyph w={17} h={18}><path d="M0 2h3l2 9h10" /><path d="M4 3h13l-2 7H5z" fill="#a9adb3" stroke="none" /><path d="M5 13h10" strokeWidth="2" /><circle cx="6" cy="16" r="1.500" fill="#ddd" /><circle cx="14" cy="16" r="1.500" fill="#ddd" /></Glyph>
          </TitleButton>
          <TitleButton $w={20} aria-label="应用">
            <Glyph><path d="M10 4 4 16h12z" strokeWidth="3" strokeLinejoin="round" /><circle cx="10" cy="3" r="2" fill="#ddd" /><circle cx="3" cy="16" r="2" fill="#ddd" /><circle cx="17" cy="16" r="2" fill="#ddd" /></Glyph>
          </TitleButton>
          <Spacer $w={7} />
          <Caret small />
          <Rule />
          <TitleButton $w={24} aria-label="帮助">
            <svg width="20" height="20" viewBox="0 0 20 20"><circle cx="10" cy="10" r="10" fill="#dcdcdc" /><path d="M6.500 8c0-5 7-4.500 7-.5 0 2.500-3.500 2.500-3.500 5" stroke="#555c66" strokeWidth="2" fill="none" /><circle cx="10" cy="15.500" r="1.300" fill="#555c66" /></svg>
          </TitleButton>
          <Spacer $w={7} />
          <Caret small />
          <Spacer $w={78} />
          <TitleButton $w={32} aria-label="最小化"><Minimize /></TitleButton>
          <TitleButton $w={30} aria-label="最大化">
            <Glyph w={15} h={15} stroke="#fff"><path d="M.7 1.500h13.600v12.800H.7zM.7 2.500h13.600" /></Glyph>
          </TitleButton>
          <TitleButton $w={30} aria-label="关闭"><Cross /></TitleButton>
        </TitleBar>

        <MenuBar>
          <MenuList>{menus.map((m) => <MenuItem key={m}>{m}</MenuItem>)}</MenuList>
          <DocControls>
            <button aria-label="最小化图形"><Minimize /></button>
            <button aria-label="还原图形"><Glyph w={15} h={15} stroke="#f4f4f4"><path d="M4 5V1h10v7h-4M4 2h10" strokeWidth="1.600" /><path d="M1 6h9v7H1zM1 7h9" /></Glyph></button>
            <button aria-label="关闭图形"><Cross /></button>
          </DocControls>
        </MenuBar>

        <TabStrip $top={2} $left={11}>
          <Slash />
          <Tab $w={50}>开始</Tab>
          <Tab $w={150} $active>设计模版aaa*<Cross s={11} w={2.4} color="#b9bec6" /></Tab>
          <Tab $w={38} aria-label="新图形"><Plus /></Tab>
          <Slash />
        </TabStrip>

        <ToolbarArea>
          <ToolbarRow>
            <Toolbar>
              <Grip />
              {viewportIcons.map((icon, i) => (
                <ToolButton key={i} aria-label={`视口 ${i + 1}`}><Glyph>{icon}</Glyph></ToolButton>
              ))}
              <Divider />
              <Combo w={124} label="视口比例" disabled />
            </Toolbar>
            <Toolbar>
              <Grip />
              <ToolButton aria-label="文字样式"><Glyph w={21} h={21}><path d="M1 16 7 2l5 14M4 11h6" strokeWidth="2.500" /><Brush x={9} y={12} /></Glyph></ToolButton>
              <Combo w={150} label="文字样式" value="Standard" indent={20} /><Divider />
              <ToolButton aria-label="标注样式"><Glyph><path d="M1 9v10M19 9v10M2 14h16M5 12l-3 2 3 2M15 12l3 2-3 2" /><Brush x={8} y={2} /></Glyph></ToolButton>
              <Combo w={150} label="标注样式" value="@图纸无比例" indent={20} /><Divider />
              <ToolButton aria-label="表格样式"><Glyph><path d="M1 1h15v14H1zM1 4h15M1 8h15M1 12h15M6 4v11M11 4v11" /><Brush x={9} y={12} /></Glyph></ToolButton>
              <Combo w={150} label="表格样式" value="Standard" indent={2} /><Divider />
              <ToolButton aria-label="多重引线样式"><Glyph><path d="m2 15 4-9h6" /><path d="m0 18 1-6 4 3z" fill="#ddd" /><circle cx="15" cy="5" r="3.500" /><Brush x={7} y={10} /></Glyph></ToolButton>
              <Combo w={150} label="多重引线样式" value="Standard" indent={20} />
            </Toolbar>
            <Toolbar>
              <Grip />
              <ToolButton aria-label="新建"><Sheet /></ToolButton>
              <ToolButton aria-label="打开"><Glyph><path d="m1 17 4-12h6l2 3h7l-3 9z" fill="#dcdcdc" /></Glyph></ToolButton>
            </Toolbar>
          </ToolbarRow>
          <ToolbarRow>
            <Toolbar>
              <Grip />
              <ToolButton aria-label="图层特性"><Glyph><Sheets /><path d="M11 8h8v12h-8z" fill="#eee" stroke="none" /><path d="M13 10h5v3h-5zM13 16h5" stroke="#3475b5" /></Glyph></ToolButton>
              <Combo w={374} label="图层" value="@公用-尺寸标注" indent={1}>
                <Glyph w={20} h={20} stroke="none"><circle cx="11" cy="7" r="6" fill="#fca609" /><path d="M8 14h6v4H8z" fill="#737b86" /></Glyph>
                <Glyph w={18} h={20} stroke="#fca609"><circle cx="9" cy="10" r="5.500" fill="#fca609" /><path d="M9 1v18M0 10h18M2.500 3.500l13 13M15.500 3.500l-13 13" /></Glyph>
                <Glyph w={20} h={20} stroke="#8a9098"><path d="M2 2h13v14H2z" /><Sq f="#777" p={[[2, 2], [15, 2], [2, 16]]} /><circle cx="14" cy="14" r="3.500" fill="#fcb02a" stroke="none" /><path d="M14 8v12M8 14h12M10 10l8 8M18 10l-8 8" stroke="#fcb02a" /></Glyph>
                <Glyph w={18} h={20} stroke="#f7a40e"><path d="M1 8h12v10H1z" fill="#f7a40e" /><path d="M10 8V4c0-3 6-3 6 0v4" strokeWidth="2" /><path d="M7 11v4" stroke="#c87a00" /></Glyph>
                <Swatch $size={16} />
              </Combo>
              <ToolButton aria-label="将对象的图层置为当前"><Glyph><Sheets top="#7db9ea" /><circle cx="11" cy="4" r="4" fill="#cfd2d6" stroke="none" /></Glyph></ToolButton>
              <ToolButton aria-label="上一个图层"><Glyph><Sheets /><path d="m0 4 5-4v3c5 0 6 2 6 5-2-2-3-2-6-2v2z" fill="#7db9ea" stroke="none" /></Glyph></ToolButton>
              <ToolButton aria-label="图层状态管理器"><Glyph><Sheets /><PropertyCard /></Glyph></ToolButton>
            </Toolbar>
            <Toolbar>
              <Grip />
              <Combo w={188} label="颜色" value="ByLayer"><Swatch $size={18} /></Combo><Divider />
              <Combo w={200} label="线型" value="ByLayer"><LineSample $w={75} /></Combo><Divider />
              <Combo w={156} label="线宽" value="ByLayer"><LineSample $w={44} /></Combo><Divider />
              <Combo w={156} label="打印样式" />
            </Toolbar>
          </ToolbarRow>
        </ToolbarArea>

        <Workspace>
          <ToolPalette tools={drawIcons} />
          <Canvas>
            <Model />
            <ViewLabels>
              <button>[−]</button><button>[俯视]</button><button>[二维线框]</button>
            </ViewLabels>
            <ViewCube>
              <svg width="78" height="86" viewBox="0 -4 78 86" fontFamily='"Noto Sans CJK SC", sans-serif' textAnchor="middle" fontSize="11" fill="#a5a8ad">
                <circle cx="39" cy="38" r="30" fill="none" stroke="#464c56" strokeWidth="6" />
                <path d="M25 24h28v28H25z" fill="#a7a7a9" stroke="#bcbcbe" />
                <path d="M31 30h16v16H31z" fill="#b4b4be" />
                <text x="39" y="43" fontSize="14" fill="#54575c">上</text>
                <text x="39" y="12">北</text><text x="39" y="74">南</text><text x="8" y="43">西</text><text x="69" y="43">东</text>
              </svg>
            </ViewCube>
            <Wcs><b>WCS</b><Caret fill="#b6b7be" /></Wcs>
            <NavBar>
              <svg width="40" height="224" viewBox="0 0 40 224" fill="none" stroke="#484d50" strokeWidth="2">
                <circle cx="33" cy="5" r="4" strokeWidth="1" /><path d="m31 3 4 4m0-4-4 4" strokeWidth="1" />
                <path d="M7 34c0-7 5-13 13-13h13v13c0 17-26 17-26 0z" /><circle cx="20" cy="34" r="9" strokeWidth="1.500" /><circle cx="20" cy="34" r="5" />
                <path d="M17 59h7l-3.500 4zM17 146h7l-3.500 4z" fill="#484d50" stroke="none" />
                <path d="M12 100C9 91 3 90 6 87c3-2 5 2 7 4L10 79c0-4 3-3 4 0l2 7V75c0-4 4-4 4 0v11l2-10c1-3 4-2 4 1l-1 10 3-6c2-3 4-1 3 2l-5 17-5 2h-7z" strokeWidth="1.500" />
                <path d="m7 109 16 16M25 108 7 126M6 114v-6h6M19 108h7v6M6 120v7h7" /><circle cx="26" cy="125" r="6" /><path d="m30 130 5 5" strokeWidth="3" />
                <path d="M18 160v18M22 160v18M14 161l6-7 6 7M14 177l6 6 6-6" strokeWidth="1.500" /><path d="M15 163c-6 1-9 3-9 5 0 5 10 7 18 5M25 163c6 1 9 3 9 5 0 3-4 5-10 5M12 168l-5 4 5 4" />
              </svg>
            </NavBar>
          </Canvas>
          <ToolPalette tools={modifyIcons} />
          <Tooltip role="tooltip">
            <TipTitle>动态观察</TipTitle>
            在三维空间中旋转视图，但<br />态观察
          </Tooltip>
        </Workspace>

        <CommandPanel>
          <CommandSide>
            <TopGrip $w={22} />
            <SideAction aria-label="关闭"><Cross s={11} w={3} color="#d9dbde" /></SideAction>
            <SideAction aria-label="自定义">
              <Glyph><path d="M19 5c0 5-4 6-7 5L4 19c-3 1-5-1-3-4l8-7c-1-5 2-8 6-7l-3 4 2 3z" fill="#d9dbde" stroke="none" /></Glyph>
            </SideAction>
          </CommandSide>
          <CommandBody>
            <History>
              <HistoryLine>按<Mono> Esc </Mono>或<Mono> Enter </Mono>键退出，或单击右键显示快捷菜单。</HistoryLine>
              <HistoryLine><Mono>*</Mono>取消<Mono>*</Mono></HistoryLine>
            </History>
            <Prompt>
              <svg width="21" height="16" viewBox="0 0 21 16"><path d="M.5.5h20v15H.5z" fill="#e8e8e8" stroke="#777" /><path d="M0 0h21v4H0z" fill="#666" /><path d="m2 6 3 3-3 3M6 12h5" stroke="#555" fill="none" /></svg>
              <Caret fill="#606060" />
              <CommandInput aria-label="命令" placeholder="键入命令" />
            </Prompt>
          </CommandBody>
        </CommandPanel>

        <TabStrip $top={0} $left={10}>
          <Tab $w={72} $active>模型</Tab>
          <Tab $w={48}>布局</Tab>
          <Slash />
          <Tab $w={40} aria-label="新布局"><Plus /></Tab>
          <Slash />
        </TabStrip>

        <StatusBar>
          <StatusInfo />
          <StatusGroup><StatusButton $w={38}>模型</StatusButton></StatusGroup>
          <StatusGroup>
            <StatusButton $w={30} aria-label="栅格"><Glyph><path d="M5 0v20M10 0v20M15 0v20M0 5h20M0 10h20M0 15h20" /></Glyph></StatusButton>
            <StatusButton $w={29} $on aria-label="捕捉"><Glyph w={16} h={16}><path d="M2 0v16M8 0v16M14 0v16" stroke="#fff" strokeWidth="3.500" strokeDasharray="3.500 2.700" /></Glyph></StatusButton>
            <StatusButton $w={21} aria-label="捕捉选项"><Caret /></StatusButton>
          </StatusGroup>
          <StatusGroup>
            <StatusButton $w={28} aria-label="正交"><Glyph><path d="M5 0v19h15M5 13h5v6" /></Glyph></StatusButton>
            <StatusButton $w={34} aria-label="极轴"><Glyph><circle cx="9" cy="11" r="7.500" /><path d="M9 11h11M9 11l8-9" /></Glyph></StatusButton>
            <StatusButton $w={16} aria-label="极轴选项"><Caret /></StatusButton>
            <StatusButton $w={34} aria-label="等轴测"><Glyph><path d="M2 3 18 18" stroke="#c05a66" /><path d="M11 1v18" stroke="#4bb184" /><path d="M9 8h4v4H9z" /></Glyph></StatusButton>
            <StatusButton $w={18} aria-label="等轴测选项"><Caret /></StatusButton>
          </StatusGroup>
          <StatusGroup>
            <StatusButton $w={28} $on aria-label="对象捕捉追踪"><Glyph stroke="#fff"><path d="M16 3 1 17h19" /><path d="M7 9h3v3H7z" fill="#fff" /></Glyph></StatusButton>
            <Spacer $w={2} />
            <StatusButton $w={28} $on aria-label="对象捕捉"><Glyph stroke="#fff"><path d="M6 3h13v16H3V7" /><path d="M1 1h5v5H1z" /></Glyph></StatusButton>
            <StatusButton $w={21} aria-label="对象捕捉选项"><Caret /></StatusButton>
          </StatusGroup>
          <StatusGroup>
            <StatusButton $w={29} $on aria-label="注释可见性"><Glyph w={22} h={20}><path d={arrowShape} fill="#fff" stroke="#fff" /><circle cx="17" cy="5" r="3.500" stroke="#fff" /></Glyph></StatusButton>
            <StatusButton $w={30} aria-label="自动缩放"><Glyph w={22} h={20}><path d={arrowShape} fill="#dfe0e2" /><path d="m17 0-4 6h3l-1 5 5-7h-3z" fill="#dfe0e2" stroke="none" /></Glyph></StatusButton>
            <StatusButton $w={30} aria-label="注释比例"><Glyph w={18} h={20}><path d={arrowShape} fill="#dfe0e2" /></Glyph></StatusButton>
            <StatusButton $w={28}>1:1</StatusButton>
            <StatusButton $w={14} aria-label="比例列表"><Caret /></StatusButton>
          </StatusGroup>
          <StatusGroup>
            <StatusButton $w={30} aria-label="切换工作空间">
              <Glyph><circle cx="10" cy="10" r="5" strokeWidth="4.500" /><path d="M10 0v4M10 16v4M0 10h4M16 10h4M3 3l3 3M14 14l3 3M17 3l-3 3M6 14l-3 3" strokeWidth="3.500" /></Glyph>
            </StatusButton>
            <StatusButton $w={20} aria-label="工作空间列表"><Caret /></StatusButton>
            <StatusButton $w={31} aria-label="注释监视器"><Plus size={19} /></StatusButton>
          </StatusGroup>
          <StatusGroup>
            <StatusButton $w={31} aria-label="隔离对象"><Glyph><path d="M1 1h7v7H1zM4 19l5-7 4 7z" /><circle cx="15" cy="8" r="4.500" /></Glyph></StatusButton>
          </StatusGroup>
          <StatusGroup>
            <StatusButton $w={33} aria-label="图形性能">
              <Glyph w={26} h={26} stroke="none"><circle cx="12" cy="11" r="10" fill="#2864ad" /><path d="M6 1v19M1 6h17" stroke="#b9e0f5" strokeWidth="1.500" /><circle cx="6" cy="6" r="2.500" stroke="#d7eefa" strokeWidth="1.500" /><path d="M1 15h10v8H1z" fill="#f2b233" /><path d="m12 19 4 4 8-10" stroke="#42b04a" strokeWidth="3.500" /></Glyph>
            </StatusButton>
          </StatusGroup>
          <StatusGroup>
            <StatusButton $w={30} aria-label="全屏显示"><Glyph><path d="M1 3h18v14H1zM4 14l4-3M16 6l-4 3" /><path d="M3 10v5h5zM17 10V5h-5z" fill="#e2e2e2" stroke="none" /></Glyph></StatusButton>
            <StatusButton $w={30} aria-label="自定义"><Glyph><path d="M0 2h20M0 10h20M0 18h20" strokeWidth="2.500" /></Glyph></StatusButton>
          </StatusGroup>
          <Watermark>SUG速哥空间<br />www.sug.xyz</Watermark>
        </StatusBar>
      </Window>
    </>
  );
}
